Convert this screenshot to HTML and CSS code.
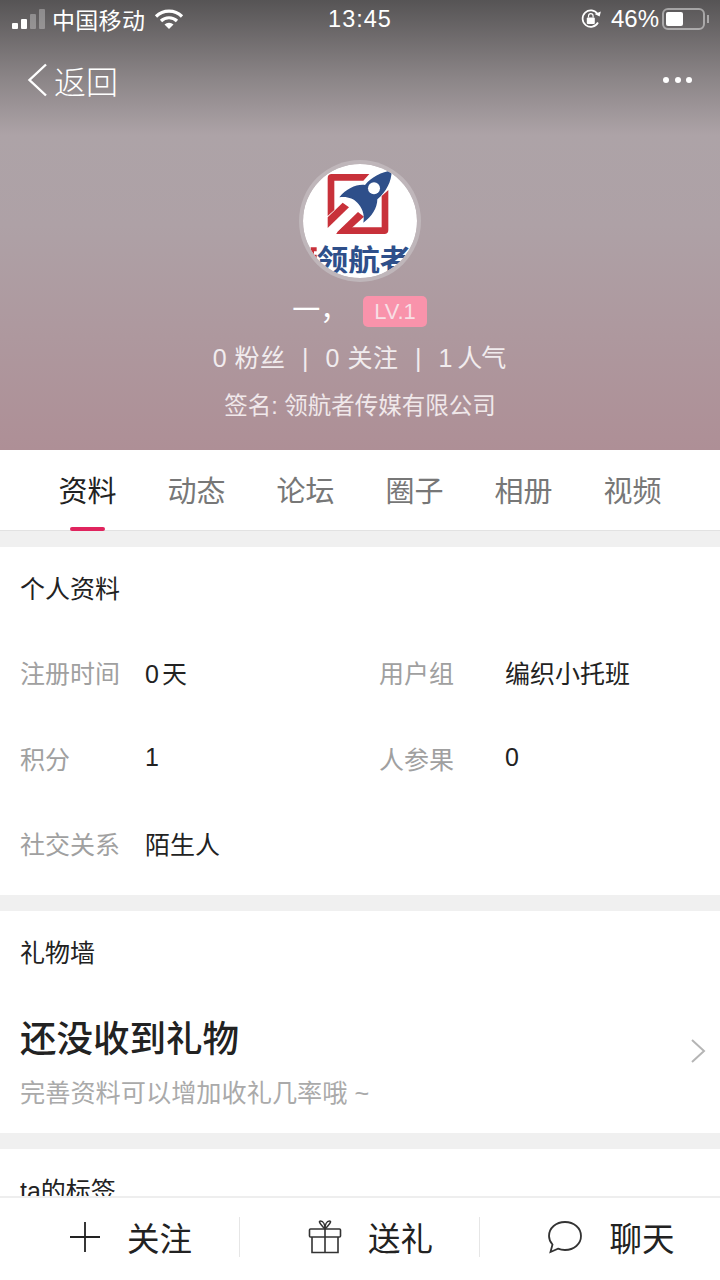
FILE: index.html
```html
<!DOCTYPE html>
<html lang="zh">
<head>
    <meta charset="UTF-8">
    <title>个人主页</title>
    <link rel="stylesheet" href="styles.css">
</head>
<body>
<div class="page">
    <div class="scroll">
        <header class="hero">
            <!-- 状态栏 -->
            <div class="status-bar">
                <div class="status-left">
                    <div class="signal"><i class="on s1"></i><i class="on s2"></i><i class="s3"></i><i class="s4"></i></div>
                    <span class="carrier">中国移动</span>
                    <svg class="wifi" width="30" height="22" viewBox="0 0 30 22">
                        <path d="M2 8.500a18.500 18.500 0 0 1 26 0" fill="none" stroke="#fff" stroke-width="3.200"/>
                        <path d="M7 13a11.500 11.500 0 0 1 16 0" fill="none" stroke="#fff" stroke-width="3.200"/>
                        <path d="M10.500 16.500a6.500 6.500 0 0 1 9 0L15 21z" fill="#fff"/>
                    </svg>
                </div>
                <span class="clock">13:45</span>
                <div class="status-right">
                    <svg class="lock" width="22" height="22" viewBox="0 0 22 22">
                        <path d="M18 14.500A8.200 8.200 0 1 1 17.600 6" fill="none" stroke="#fff" stroke-width="1.700"/>
                        <path d="M15 7.500l5.500 0-1-5z" fill="#fff" transform="rotate(25 18 6)"/>
                        <rect x="6.800" y="9.500" width="8" height="6.500" rx="1" fill="#fff"/>
                        <path d="M8.500 9.500V8a2.300 2.300 0 0 1 4.600 0v1.500" fill="none" stroke="#fff" stroke-width="1.200"/>
                    </svg>
                    <span class="percent">46%</span>
                    <div class="battery"><div class="battery-fill"></div></div>
                    <div class="battery-tip"></div>
                </div>
            </div>

            <div class="nav">
                <div class="back">
                    <svg width="22" height="34" viewBox="0 0 22 34"><path d="M19 1.500L2.500 17 19 32.500" fill="none" stroke="#fff" stroke-width="2.400"/></svg>
                    <span>返回</span>
                </div>
                <div class="more"><i></i><i></i><i></i></div>
            </div>

            <div class="avatar">
                <svg width="114" height="114" viewBox="0 0 114 114">
                    <defs>
                        <clipPath id="avatar-clip"><circle cx="57" cy="57" r="57"/></clipPath>
                        <clipPath id="logo-clip"><rect x="0" y="250" width="360" height="90"/></clipPath>
                    </defs>
                    <g clip-path="url(#avatar-clip)">
                        <rect width="114" height="114" fill="#fff"/>
                        <!-- 3倍ズームの座標のまま描く -->
                        <g transform="translate(-3 -4) scale(.33333)">
                            <path d="M95 42H208L190 62H103V150L83 168V54Q83 42 95 42Z" fill="#c8313a"/>
                            <path d="M245 108L265 90V210Q265 222 253 222H108L128 202H245Z" fill="#c8313a"/>
                            <path d="M83 172L128 128 147 142 83 204Z" fill="#c8313a"/>
                            <path d="M112 216L174 156 192 170 135 222H112Z" fill="#c8313a"/>
                            <path d="M275 32C245 35 215 50 195 75 170 72 140 85 118 112 140 108 160 115 172 128 185 142 195 160 190 188 215 170 232 145 232 118 258 95 275 65 275 32Z" fill="#2e4f8a"/>
                            <circle cx="222" cy="85" r="18" fill="#fff"/>
                            <path d="M32 262h18v12H42v10h8v12H32z" fill="#c8313a"/>
                            <g clip-path="url(#logo-clip)">
                                <text class="logo-text" x="50" y="332" textLength="284" lengthAdjust="spacingAndGlyphs">领航者</text>
                            </g>
                        </g>
                    </g>
                </svg>
            </div>

            <div class="name-row">
                <span class="name">一，</span>
                <span class="level">LV.1</span>
            </div>
            <div class="stats">
                <span>0 粉丝</span><span class="sep">|</span><span>0 关注</span><span class="sep">|</span><span class="last-stat">1 人气</span>
            </div>
            <div class="signature">签名: 领航者传媒有限公司</div>
        </header>

        <nav class="tabs">
            <div class="tab active">资料</div>
            <div class="tab">动态</div>
            <div class="tab">论坛</div>
            <div class="tab">圈子</div>
            <div class="tab">相册</div>
            <div class="tab">视频</div>
        </nav>

        <section class="card profile">
            <h2 class="card-title">个人资料</h2>
            <div class="info-grid">
                <div class="info"><span class="info-label">注册时间</span><span class="info-value days">0天</span></div>
                <div class="info"><span class="info-label short">用户组</span><span class="info-value">编织小托班</span></div>
                <div class="info"><span class="info-label">积分</span><span class="info-value">1</span></div>
                <div class="info"><span class="info-label short">人参果</span><span class="info-value">0</span></div>
                <div class="info"><span class="info-label">社交关系</span><span class="info-value">陌生人</span></div>
            </div>
        </section>

        <section class="card gifts">
            <h2 class="card-title">礼物墙</h2>
            <div class="gift-row">
                <div>
                    <div class="gift-main">还没收到礼物</div>
                    <div class="gift-sub">完善资料可以增加收礼几率哦 ~</div>
                </div>
                <svg class="gift-arrow" width="16" height="26" viewBox="0 0 16 26"><path d="M2 2l12 11L2 24" fill="none" stroke="#b5b5b5" stroke-width="2"/></svg>
            </div>
        </section>

        <section class="card tags">
            <h2 class="card-title">ta的标签</h2>
        </section>
    </div>

    <!-- 底部操作栏 -->
    <footer class="actions">
        <div class="action">
            <svg width="32" height="32" viewBox="0 0 32 32"><path d="M16 1v30M1 16h30" fill="none" stroke="#222" stroke-width="1.800"/></svg>
            <span>关注</span>
        </div>
        <div class="action">
            <svg width="34" height="34" viewBox="0 0 34 34" fill="none" stroke="#333" stroke-width="1.600">
                <rect x="1.500" y="9" width="31" height="8" rx="1"/>
                <path d="M4 17v15.500h26V17M17 9v23.500"/>
                <path d="M17 9C14 6 9.500 1 12.500 1S17 5 17 9C17 5 18.500 1 21.500 1S20 6 17 9Z"/>
            </svg>
            <span>送礼</span>
        </div>
        <div class="action">
            <svg width="36" height="34" viewBox="0 0 36 34"><path d="M18 2c9 0 16 6 16 14s-7 14-16 14c-2.500 0-5-.5-7-1.300L3.500 32l2-7.500C3 21.800 2 19 2 16 2 8 9 2 18 2z" fill="none" stroke="#333" stroke-width="1.800"/></svg>
            <span>聊天</span>
        </div>
    </footer>
</div>
</body>
</html>
```

FILE: styles.css
```css
:root {
    --gap-color: #f0f0f0;
    --text-color: #222;
    --label-color: #a0a0a0;
    --accent: #e0245e;
}
html {
    box-sizing: border-box;
}
*, *:before, *:after {
    box-sizing: inherit;
}
body {
    margin: 0;
    font-family: "Liberation Sans", "Noto Sans CJK SC", sans-serif;
    color: var(--text-color);
    background: #fff;
}
.page {
    width: 720px;
    height: 1280px;
    display: flex;
    flex-direction: column;
    overflow: hidden;
}
.scroll {
    flex: 1;
    min-height: 0;
    overflow: hidden;
}

/* 顶部区域 */
.hero {
    height: 450px;
    background: linear-gradient(180deg, #565455 0%, #8a8486 17%, #ada3a7 30%, #aea1a6 50%, #ae8f96 100%);
    color: #fff;
    display: flex;
    flex-direction: column;
    align-items: center;
}
.status-bar {
    width: 100%;
    height: 40px;
    padding: 0 12px 2px;
    display: grid;
    grid-template-columns: 1fr auto 1fr;
    align-items: center;
    font-size: 23px;
}
.status-left, .status-right {
    display: flex;
    align-items: center;
}
.status-right {
    justify-content: flex-end;
}
.signal {
    display: flex;
    align-items: flex-end;
    gap: 3px;
    height: 20px;
    margin-right: 7px;
}
.signal i {
    width: 6px;
    background: rgba(255, 255, 255, 0.3);
    border-radius: 1px;
}
.signal i.on {
    background: #fff;
}
.s1 { height: 6px; }
.s2 { height: 10px; }
.s3 { height: 15px; }
.s4 { height: 20px; }
.carrier {
    letter-spacing: 0.3px;
}
.wifi {
    margin-left: 9px;
}
.clock {
    font-size: 23.500px;
    letter-spacing: 1px;
}
.percent {
    font-size: 24px;
    margin: 0 3px 0 9px;
}
.battery {
    width: 43px;
    height: 22px;
    border: 2px solid rgba(255, 255, 255, 0.45);
    border-radius: 6px;
    padding: 2px;
}
.battery-fill {
    width: 17px;
    height: 100%;
    background: #fff;
    border-radius: 2px;
}
.battery-tip {
    width: 2px;
    height: 8px;
    margin-left: 2px;
    margin-right: -1px;
    background: rgba(255, 255, 255, 0.45);
}
.nav {
    width: 100%;
    height: 80px;
    padding: 0 27px;
    display: flex;
    align-items: center;
    justify-content: space-between;
}
.back {
    display: flex;
    align-items: center;
    gap: 5px;
    font-size: 32px;
    font-weight: 300;
}
.more {
    display: flex;
    gap: 5.500px;
    margin-right: 1px;
}
.more i {
    width: 6px;
    height: 6px;
    border-radius: 50%;
    background: #fff;
}
.avatar {
    margin-top: 40px;
    width: 122px;
    height: 122px;
    padding: 4px;
    border-radius: 50%;
    background: #bfb6ba;
}
.avatar svg {
    display: block;
    border-radius: 50%;
}
.logo-text {
    font-size: 88px;
    font-weight: 700;
    fill: #2e4f8a;
}
.name-row {
    height: 50px;
    margin-top: 4px;
    margin-left: -1px;
    display: flex;
    align-items: center;
    gap: 29px;
}
.name {
    width: 42px;
    font-size: 28px;
    line-height: 1;
    white-space: nowrap;
}
.level {
    height: 31px;
    line-height: 31px;
    padding: 0 11px;
    border-radius: 5px;
    background: #f993ab;
    color: #f7dfe4;
    font-size: 22px;
}
.stats {
    margin-top: 5px;
    margin-left: -2px;
    display: flex;
    align-items: center;
    font-size: 25px;
    letter-spacing: 0.5px;
    line-height: 34px;
    color: #f1ecee;
}
.last-stat {
    letter-spacing: -1px;
}
.sep {
    margin: 0 16.500px;
}
.signature {
    margin-top: 14px;
    font-size: 23.500px;
    line-height: 34px;
    color: #f0e8ea;
}

/* タブ */
.tabs {
    height: 81px;
    padding: 0 33px;
    display: flex;
    border-bottom: 1px solid #e2e2e2;
}
.tab {
    position: relative;
    flex: 1;
    text-align: center;
    font-size: 29px;
    line-height: 84px;
    color: #777;
}
.tab.active {
    color: var(--text-color);
}
.tab.active:after {
    content: "";
    position: absolute;
    left: 50%;
    bottom: -1px;
    width: 35px;
    height: 4px;
    margin-left: -18px;
    border-radius: 2px;
    background: var(--accent);
}

.card {
    margin-top: 16px;
    background: #fff;
    padding: 0 20px;
    box-shadow: 0 -16px 0 var(--gap-color);
}
.card-title {
    margin: 0;
    font-size: 25px;
    font-weight: 400;
    line-height: 34px;
}
.profile {
    height: 348px;
    padding-top: 25px;
}
.info-grid {
    margin-top: 23.500px;
    display: grid;
    grid-template-columns: 359px 1fr;
}
.info {
    height: 85.500px;
    display: flex;
    align-items: center;
    font-size: 25px;
}
.info-label {
    width: 125px;
    color: var(--label-color);
}
.info-label.short {
    width: 126px;
}
.days {
    letter-spacing: 3px;
}
.gifts {
    height: 222px;
    padding-top: 25px;
}
.gift-row {
    margin-top: 45px;
    margin-right: -6px;
    display: flex;
    align-items: center;
    justify-content: space-between;
}
.gift-main {
    font-size: 36.500px;
    font-weight: 500;
    line-height: 50px;
}
.gift-sub {
    margin-top: 11px;
    font-size: 25.200px;
    line-height: 34px;
    color: #aaa;
}
.gift-arrow {
    margin-bottom: 24px;
}
.tags {
    padding-top: 25px;
}

/* 底部操作栏 */
.actions {
    height: 84px;
    flex-shrink: 0;
    background: #fff;
    border-top: 2px solid #eee;
    display: flex;
    align-items: flex-start;
    padding-top: 19px;
}
.action {
    width: 240px;
    height: 40px;
    padding-left: 22px;
    display: flex;
    align-items: center;
    justify-content: center;
    gap: 26px;
    font-size: 32.500px;
    border-right: 1px solid #e6e6e6;
}
.action span {
    margin-bottom: 2px;
}
.action:last-child {
    border-right: 0;
}
```
